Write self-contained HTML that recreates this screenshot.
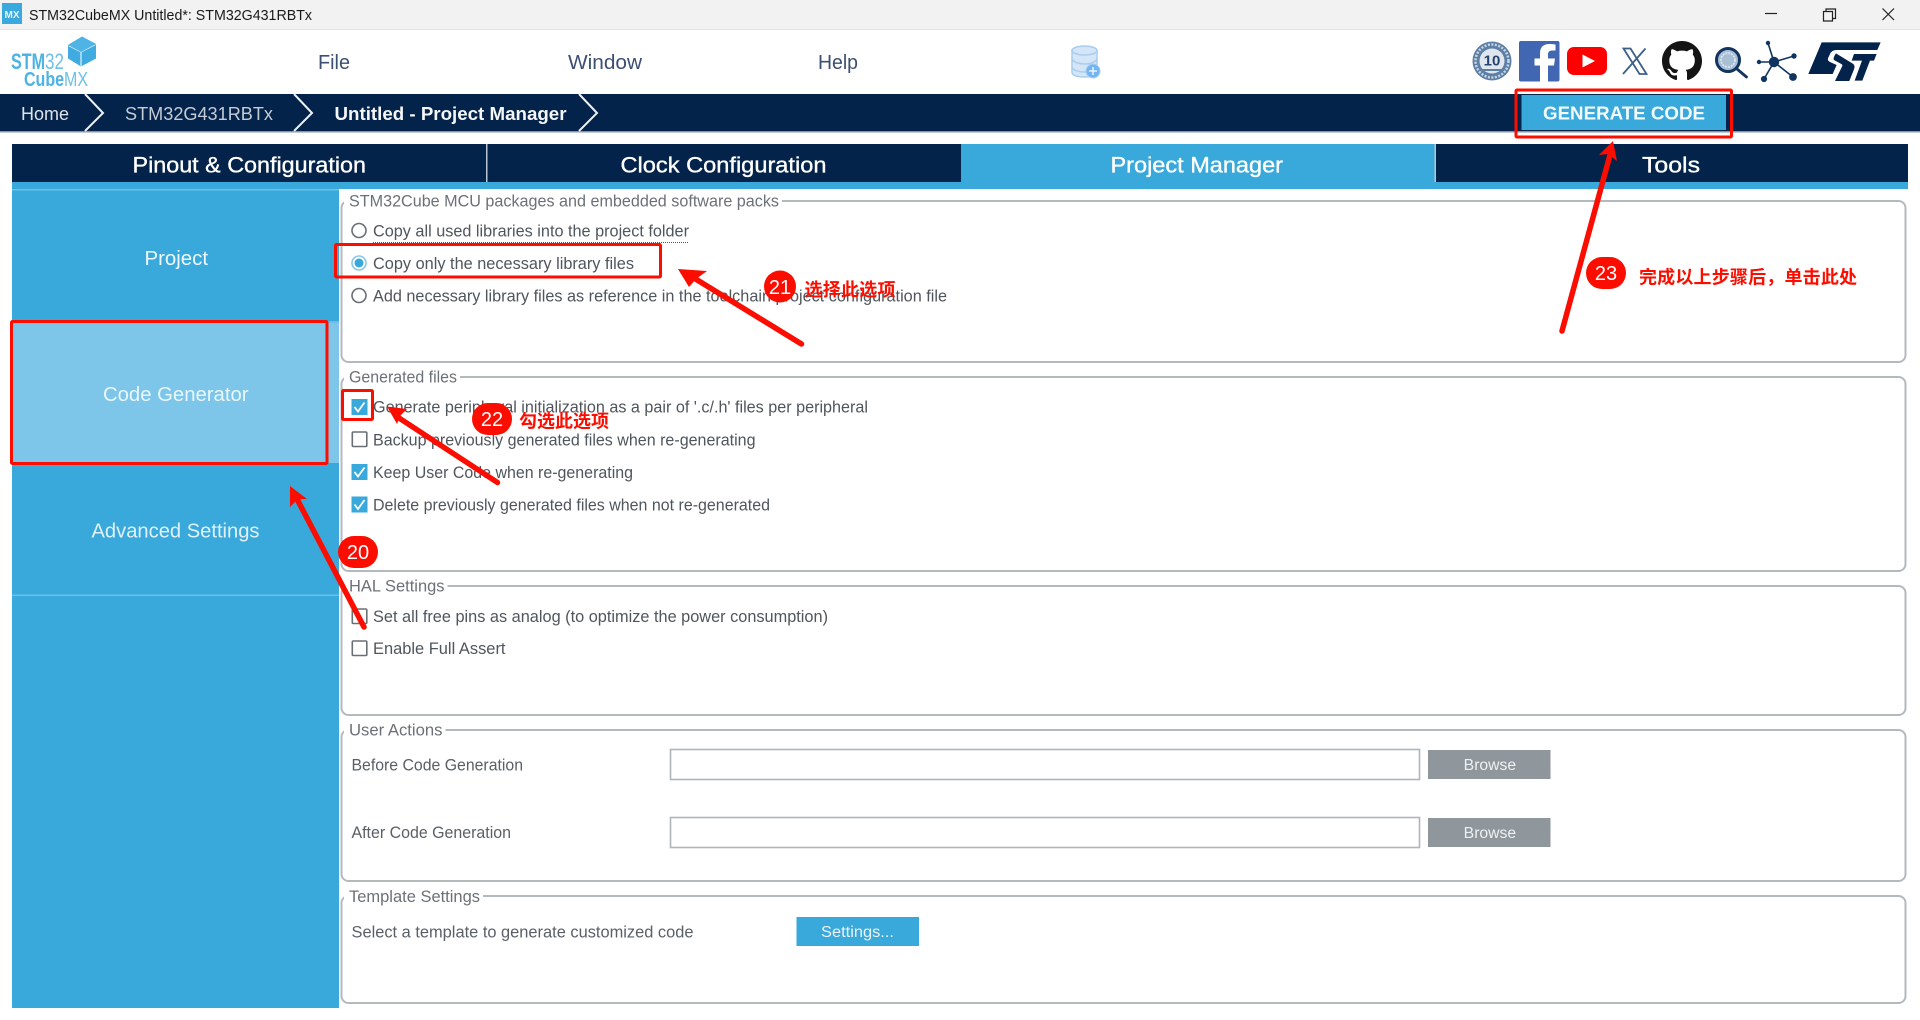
<!DOCTYPE html>
<html lang="en">
<head>
<meta charset="utf-8">
<title>STM32CubeMX Untitled*: STM32G431RBTx</title>
<style>
html,body{margin:0;padding:0;background:#fff;width:1920px;height:1020px;overflow:hidden}
svg{display:block;filter:blur(.3px)}
text{font-family:"Liberation Sans","Noto Sans CJK SC",sans-serif}
.row{font-size:16.3px;fill:#50565c}
.lbl{font-size:16.3px;fill:#5b6066}
.leg{font-size:16.3px;fill:#6c7177}
.tab{font-size:22.5px;fill:#fff;font-weight:400;stroke:#fff;stroke-width:.35}
.nav{font-size:18.5px;fill:#dfe4ea}
.side{font-size:20px;fill:#f0f8fd}
.menu{font-size:20px;fill:#3c4f72}
.note{font-size:18px;fill:#fb0d00;font-weight:700}
.num{font-size:20px;fill:#fff;text-anchor:middle}
.btn{font-size:15.5px;fill:#eef1f3}
.fs{fill:none;stroke:#b4b9be;stroke-width:2}
.box{fill:#fff;stroke:#6a6f74;stroke-width:1.6}
.chk{fill:none;stroke:#fff;stroke-width:1.8}
.inp{fill:#fff;stroke:#b0b5ba;stroke-width:1.6}
.red{fill:none;stroke:#fb0d00;stroke-width:3}
.arr{stroke:#fb0d00;stroke-width:5.500;stroke-linecap:round;fill:none}
.hd{fill:#fb0d00}
</style>
</head>
<body>
<svg width="1920" height="1020" viewBox="0 0 1920 1020" xmlns="http://www.w3.org/2000/svg">
<rect width="1920" height="1020" fill="#fff"/>

<!-- title bar -->
<rect width="1920" height="29" fill="#f2f2f2"/>
<rect y="29" width="1920" height="1" fill="#e4e4e4"/>
<rect x="2" y="3" width="20" height="21" fill="#3aa9dd"/>
<text x="4.500" y="18" font-size="10" font-weight="700" fill="#e8f5fb" textLength="15" lengthAdjust="spacingAndGlyphs">MX</text>
<text x="29" y="20" font-size="14.500" fill="#1a1a1a" textLength="283" lengthAdjust="spacingAndGlyphs">STM32CubeMX Untitled*: STM32G431RBTx</text>
<path d="M1765 13.500H1777" stroke="#222" stroke-width="1.200"/>
<path d="M1823.500 11.500h9v9.500h-9z M1826 11.500v-2.500h9.500v9.500h-2.500" fill="none" stroke="#222" stroke-width="1.200"/>
<path d="M1882.500 8.500L1894 20M1894 8.500L1882.500 20" stroke="#222" stroke-width="1.200"/>

<!-- logo -->
<text x="11" y="69" font-size="22" font-weight="700" fill="#4db2e4" textLength="34" lengthAdjust="spacingAndGlyphs">STM</text>
<text x="45" y="69" font-size="22" fill="#6cc0e9" textLength="19" lengthAdjust="spacingAndGlyphs">32</text>
<text x="24" y="86" font-size="20" font-weight="700" fill="#4db2e4" textLength="40" lengthAdjust="spacingAndGlyphs">Cube</text>
<text x="64" y="86" font-size="20" fill="#6cc0e9" textLength="24" lengthAdjust="spacingAndGlyphs">MX</text>
<path d="M82 36.500L96 44V58.500L81 66.500L68 58.500V45Z" fill="#3fabe0"/>
<path d="M68.500 45.500L81 52L95.500 44.500M81 52V66" fill="none" stroke="#dff2fb" stroke-width="1.200"/>
<path d="M82 37L96 44L81 52L68 45Z" fill="#4fb3e5"/>

<!-- menu -->
<text class="menu" x="318" y="69" textLength="32" lengthAdjust="spacingAndGlyphs">File</text>
<text class="menu" x="568" y="69" textLength="74" lengthAdjust="spacingAndGlyphs">Window</text>
<text class="menu" x="818" y="69" textLength="40" lengthAdjust="spacingAndGlyphs">Help</text>

<!-- database icon -->
<g fill="#d3e5f6" stroke="#a9cdec" stroke-width="1.500">
<path d="M1072 50V72Q1072 77 1085 77Q1097 77 1097 72V50Z"/>
<ellipse cx="1084.500" cy="50.500" rx="12.500" ry="4.500"/>
<path d="M1072 59.500Q1076 64 1085 64Q1093 64 1097 59.500M1072 68Q1076 72 1085 72Q1093 72 1097 68" fill="none"/>
</g>
<circle cx="1093" cy="71" r="7" fill="#74b4f0" stroke="#a6d0f5" stroke-width="1"/>
<path d="M1089 71H1097M1093 67V75" stroke="#e9f4fd" stroke-width="1.500"/>

<!-- social icons -->
<circle cx="1492" cy="61" r="19.500" fill="#5d7fa5"/>
<circle cx="1492" cy="61" r="16.500" fill="none" stroke="#c8d5e2" stroke-width="2.500" stroke-dasharray="2 1.500"/>
<circle cx="1492" cy="61" r="12.500" fill="#dfe6ee"/>
<text x="1492" y="65.500" font-size="15" font-weight="700" fill="#25456e" text-anchor="middle">10</text>
<path d="M1480 70H1504" stroke="#5d7fa5" stroke-width="2"/>

<rect x="1519" y="41" width="40.500" height="40.500" rx="2" fill="#4267b2"/>
<path d="M1548 81.500V65.500H1554L1555 58.500H1548V54.500Q1548 50.500 1552 50.500H1555.500V44.500Q1552.500 44 1549.500 44Q1540 44 1540 53.500V58.500H1534.500V65.500H1540V81.500Z" fill="#fff"/>

<rect x="1567" y="47" width="40" height="28" rx="7" fill="#fe0000"/>
<path d="M1582.500 54.500L1595 61L1582.500 67.500Z" fill="#fff"/>

<path d="M1623.500 48.500H1630.500L1646.500 74H1639.500Z" fill="none" stroke="#3c5f8a" stroke-width="1.800"/>
<path d="M1645.500 48.500L1623 74" stroke="#3c5f8a" stroke-width="1.800"/>

<g transform="translate(1662,41) scale(2.5)">
<path fill="#141414" d="M8 0C3.58 0 0 3.58 0 8c0 3.54 2.29 6.53 5.47 7.59.4.07.55-.17.55-.38 0-.19-.01-.82-.01-1.49-2.01.37-2.53-.49-2.69-.94-.09-.23-.48-.94-.82-1.13-.28-.15-.68-.52-.01-.53.63-.01 1.08.58 1.23.82.72 1.21 1.87.87 2.33.66.07-.52.28-.87.51-1.07-1.78-.2-3.64-.89-3.64-3.95 0-.87.31-1.59.82-2.15-.08-.2-.36-1.02.08-2.12 0 0 .67-.21 2.2.82.64-.18 1.32-.27 2-.27.68 0 1.36.09 2 .27 1.53-1.04 2.2-.82 2.2-.82.44 1.1.16 1.92.08 2.12.51.56.82 1.27.82 2.15 0 3.07-1.87 3.75-3.65 3.95.29.25.54.73.54 1.48 0 1.07-.01 1.93-.01 2.2 0 .21.15.46.55.38A8.013 8.013 0 0016 8c0-4.42-3.58-8-8-8z"/>
</g>

<circle cx="1728" cy="60" r="11.500" fill="#a9bfd6" stroke="#12345e" stroke-width="3"/>
<circle cx="1728" cy="60" r="7" fill="none" stroke="#e5ecf3" stroke-width="1.500" stroke-dasharray="2 1"/>
<path d="M1737 69L1746.500 77" stroke="#12345e" stroke-width="2.800" stroke-linecap="round"/>

<g fill="#0f3460" stroke="#0f3460">
<path d="M1774 62L1768 43M1774 62L1794 56M1774 62L1759 62M1774 62L1764 79M1774 62L1793 77" stroke-width="1.600"/>
<circle cx="1774" cy="62" r="4.700"/><circle cx="1768" cy="43" r="1.700"/><circle cx="1794" cy="56" r="2.200"/><circle cx="1759" cy="62" r="1.700"/><circle cx="1764" cy="79" r="2.600"/><circle cx="1793" cy="77" r="3.400"/>
</g>

<g transform="translate(1680,30) scale(.3333)" fill="#04234a">
<path d="M425 37H602L592 60H470Q455 60 450 72L444 85Q442 92 450 96L470 105L458 132H385Z"/>
<path d="M468 70L520 102Q526 108 522 118L508 153H465L487 108Q488 104 484 102L462 90Q458 84 468 70Z"/>
<path d="M522 72H590L582 92H570L547 152H524L546 92H515Z"/>
</g>

<!-- nav -->
<rect y="94" width="1920" height="37" fill="#04234a"/>
<rect y="131" width="1920" height="1.500" fill="#8694a6"/>
<text class="nav" x="21" y="120" textLength="48" lengthAdjust="spacingAndGlyphs">Home</text>
<text class="nav" x="125" y="120" textLength="148" lengthAdjust="spacingAndGlyphs" style="fill:#c5ccd5">STM32G431RBTx</text>
<text class="nav" x="334.500" y="120" textLength="232" lengthAdjust="spacingAndGlyphs" style="font-weight:700;fill:#f4f6f8">Untitled - Project Manager</text>
<path d="M85 94L103 113L85 131M294 94L312 113L294 131M579 94L597 113L579 131" fill="none" stroke="#eef1f4" stroke-width="2"/>

<rect x="1521.500" y="95" width="204.500" height="35" fill="#39a9dc"/>
<text x="1543" y="119.500" font-size="18" font-weight="700" fill="#f3fafd" textLength="162" lengthAdjust="spacingAndGlyphs">GENERATE CODE</text>

<!-- tabs -->
<rect x="12" y="144" width="1896" height="38" fill="#04234a"/>
<rect x="961" y="144" width="474" height="38" fill="#39a9dc"/>
<rect x="12" y="182" width="1896" height="7" fill="#39a9dc"/>
<rect x="486" y="144" width="1.500" height="38" fill="#b8c4d0"/>
<rect x="1434.500" y="144" width="1.500" height="38" fill="#b8c4d0"/>
<text class="tab" x="132.500" y="172.500" textLength="233.500" lengthAdjust="spacingAndGlyphs">Pinout &amp; Configuration</text>
<text class="tab" x="620.500" y="172.500" textLength="206" lengthAdjust="spacingAndGlyphs">Clock Configuration</text>
<text class="tab" x="1110.500" y="172.500" textLength="172.500" lengthAdjust="spacingAndGlyphs">Project Manager</text>
<text class="tab" x="1642" y="172.500" textLength="58" lengthAdjust="spacingAndGlyphs">Tools</text>

<!-- sidebar -->
<rect x="12" y="189" width="327" height="819" fill="#39a9dc"/>
<rect x="12" y="189" width="327" height="1.500" fill="#6cbfe6"/>
<rect x="12" y="322" width="327" height="141" fill="#7dc5e9"/>
<rect x="12" y="321" width="327" height="1.500" fill="#68bce4"/>
<rect x="12" y="594.500" width="327" height="1.500" fill="#6cbfe6"/>
<text class="side" x="144.500" y="265" textLength="63.500" lengthAdjust="spacingAndGlyphs">Project</text>
<text class="side" x="103" y="401" textLength="145.500" lengthAdjust="spacingAndGlyphs" style="fill:#e9f6fc">Code Generator</text>
<text class="side" x="91.500" y="537.500" textLength="168" lengthAdjust="spacingAndGlyphs" style="fill:#dff1fa">Advanced Settings</text>

<!-- fieldsets -->
<rect class="fs" x="341.500" y="201" width="1564" height="161" rx="7"/>
<rect x="344" y="196" width="438" height="10" fill="#fff"/>
<rect class="fs" x="341.500" y="377" width="1564" height="194" rx="7"/>
<rect x="344" y="372" width="116" height="10" fill="#fff"/>
<rect class="fs" x="341.500" y="586" width="1564" height="129" rx="7"/>
<rect x="344" y="581" width="103.500" height="10" fill="#fff"/>
<rect class="fs" x="341.500" y="730" width="1564" height="151" rx="7"/>
<rect x="344" y="725" width="101.500" height="10" fill="#fff"/>
<rect class="fs" x="341.500" y="896" width="1564" height="107" rx="7"/>
<rect x="344" y="891" width="139" height="10" fill="#fff"/>

<text class="leg" x="349" y="206.500" textLength="430" lengthAdjust="spacingAndGlyphs">STM32Cube MCU packages and embedded software packs</text>
<text class="leg" x="349" y="382.500" textLength="108" lengthAdjust="spacingAndGlyphs">Generated files</text>
<text class="leg" x="349" y="591.500" textLength="95.500" lengthAdjust="spacingAndGlyphs">HAL Settings</text>
<text class="leg" x="349" y="735.500" textLength="93.500" lengthAdjust="spacingAndGlyphs">User Actions</text>
<text class="leg" x="349" y="902" textLength="131" lengthAdjust="spacingAndGlyphs">Template Settings</text>

<!-- radios -->
<circle cx="359" cy="230.500" r="7" class="box"/>
<circle cx="359" cy="263" r="7" fill="#fff" stroke="#86c8ec" stroke-width="1.600"/>
<circle cx="359" cy="263" r="4.500" fill="#39a9dc"/>
<circle cx="359" cy="295.500" r="7" class="box"/>
<text class="row" x="373" y="236.500" textLength="316" lengthAdjust="spacingAndGlyphs">Copy all used libraries into the project folder</text>
<path d="M373 242.500H689" stroke="#555" stroke-width="1" stroke-dasharray="1 1"/>
<text class="row" x="373" y="269" textLength="261" lengthAdjust="spacingAndGlyphs">Copy only the necessary library files</text>
<text class="row" x="373" y="301.500" textLength="574" lengthAdjust="spacingAndGlyphs">Add necessary library files as reference in the toolchain project configuration file</text>

<!-- generated files -->
<rect x="351.500" y="399" width="16" height="16" fill="#39a9dc"/>
<path class="chk" d="M354.500 407L358 411.500L364.500 402.500"/>
<rect x="352.300" y="432" width="14.500" height="14.500" rx="1" class="box"/>
<rect x="351.500" y="464" width="16" height="16" fill="#39a9dc"/>
<path class="chk" d="M354.500 472L358 476.500L364.500 467.500"/>
<rect x="351.500" y="496.500" width="16" height="16" fill="#39a9dc"/>
<path class="chk" d="M354.500 504.500L358 509L364.500 500"/>
<text class="row" x="373" y="412.500" textLength="495" lengthAdjust="spacingAndGlyphs">Generate peripheral initialization as a pair of '.c/.h' files per peripheral</text>
<text class="row" x="373" y="445.500" textLength="382.500" lengthAdjust="spacingAndGlyphs">Backup previously generated files when re-generating</text>
<text class="row" x="373" y="478" textLength="260" lengthAdjust="spacingAndGlyphs">Keep User Code when re-generating</text>
<text class="row" x="373" y="510.500" textLength="397" lengthAdjust="spacingAndGlyphs">Delete previously generated files when not re-generated</text>

<!-- HAL -->
<rect x="352.300" y="609" width="14.500" height="14.500" rx="1" class="box"/>
<rect x="352.300" y="641" width="14.500" height="14.500" rx="1" class="box"/>
<text class="row" x="373" y="622" textLength="455" lengthAdjust="spacingAndGlyphs">Set all free pins as analog (to optimize the power consumption)</text>
<text class="row" x="373" y="654" textLength="132.500" lengthAdjust="spacingAndGlyphs">Enable Full Assert</text>

<!-- user actions -->
<text class="lbl" x="351.500" y="770.500" textLength="171.500" lengthAdjust="spacingAndGlyphs">Before Code Generation</text>
<text class="lbl" x="351.500" y="838" textLength="159.500" lengthAdjust="spacingAndGlyphs">After Code Generation</text>
<rect class="inp" x="670.500" y="749.500" width="749" height="30"/>
<rect class="inp" x="670.500" y="817.500" width="749" height="30"/>
<rect x="1428" y="750" width="122.500" height="29" fill="#8f969c"/>
<rect x="1428" y="818" width="122.500" height="29" fill="#8f969c"/>
<text class="btn" x="1463.700" y="770" textLength="52.500" lengthAdjust="spacingAndGlyphs">Browse</text>
<text class="btn" x="1463.700" y="838" textLength="52.500" lengthAdjust="spacingAndGlyphs">Browse</text>

<!-- template -->
<text class="lbl" x="351.500" y="937.500" textLength="342" lengthAdjust="spacingAndGlyphs">Select a template to generate customized code</text>
<rect x="796.500" y="917" width="122.500" height="29" fill="#39a9dc"/>
<text class="btn" x="821" y="937" textLength="73" lengthAdjust="spacingAndGlyphs">Settings...</text>

<!-- annotations -->
<rect class="red" x="1516" y="90" width="215.500" height="47" rx="1"/>
<rect class="red" x="335.500" y="244.500" width="325" height="32.500" rx="1"/>
<rect class="red" x="342.500" y="390.500" width="30" height="29" rx="1"/>
<rect class="red" x="11.500" y="321.500" width="315.500" height="142" rx="1"/>

<path class="arr" d="M1562 331L1610 155"/>
<path class="hd" d="M1613 141L1599 155L1608 154L1617 161Z"/>
<path class="arr" d="M801.500 344L694 278"/>
<path class="hd" d="M678 269L707 271L696 279L689 287Z"/>
<path class="arr" d="M497.500 482.500L396 416"/>
<path class="hd" d="M387 406.500L407 409L400 416L397 424Z"/>
<path class="arr" d="M364 627L297 499"/>
<path class="hd" d="M290 486L307 499L298 499L290 507Z"/>

<rect x="1586" y="257" width="40" height="32" rx="16" fill="#fb0d00"/>
<text class="num" x="1606" y="280">23</text>
<circle cx="780" cy="286.500" r="16" fill="#fb0d00"/>
<text class="num" x="780" y="294">21</text>
<rect x="472" y="403" width="40" height="32" rx="16" fill="#fb0d00"/>
<text class="num" x="492" y="426">22</text>
<rect x="338" y="536" width="40" height="32" rx="16" fill="#fb0d00"/>
<text class="num" x="358" y="559">20</text>

<text class="note" x="804.500" y="296" textLength="91">选择此选项</text>
<text class="note" x="519" y="427.500" textLength="90">勾选此选项</text>
<text class="note" x="1639" y="283.500" textLength="218">完成以上步骤后，单击此处</text>
</svg>
</body>
</html>
